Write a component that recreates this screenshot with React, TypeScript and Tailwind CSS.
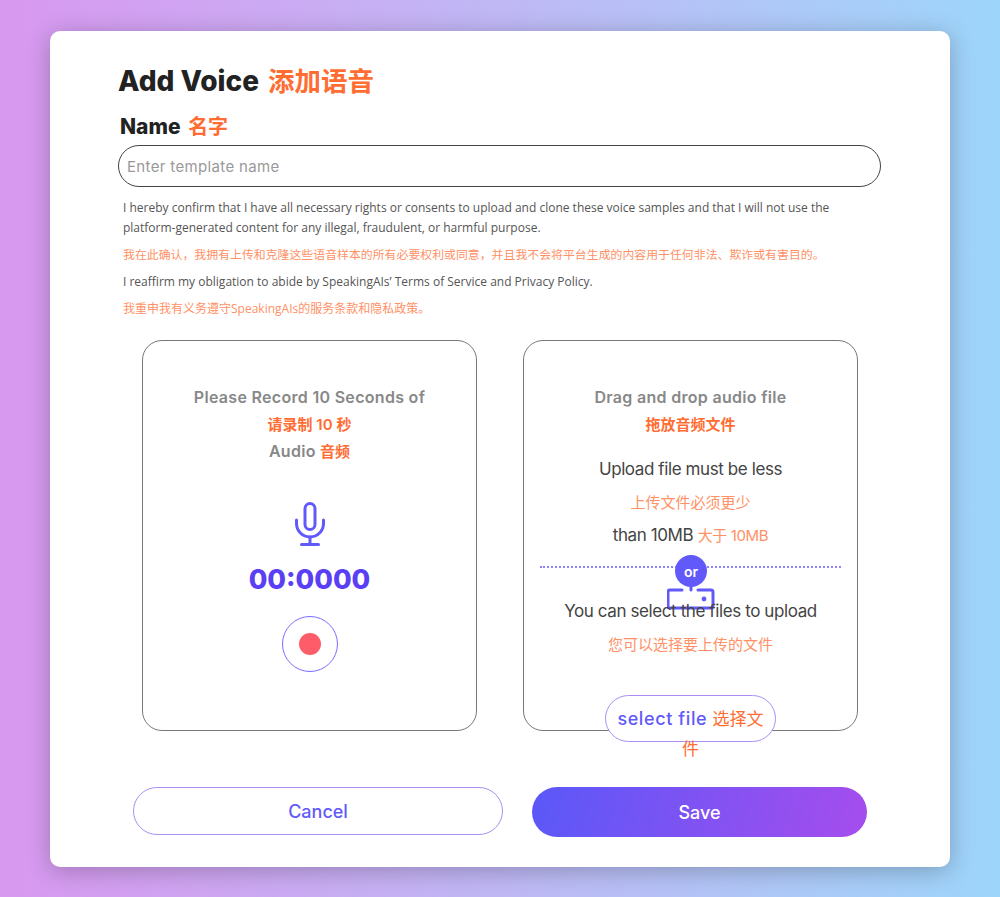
const workSans = "font-['Inter','Noto_Sans_CJK_SC',sans-serif]"
const bodySans = "font-['Open_Sans','Noto_Sans_CJK_SC',sans-serif]"

function MicIcon() {
  return (
    <svg width="30" height="44" viewBox="0 0 30 44" fill="none" stroke="#6259fb" strokeWidth="3" strokeLinecap="round" strokeLinejoin="round">
      <rect x="10" y="1.5" width="10" height="26" rx="5" />
      <path d="M1.5 18v3.5a13.5 13.5 0 0 0 27 0V18" />
      <path d="M15 35v7.5" />
      <path d="M6.5 42.5h17" />
    </svg>
  )
}

function TrayIcon() {
  return (
    <svg width="48" height="28" viewBox="0 0 48 28" fill="none" stroke="#6259fb" strokeWidth="3" strokeLinecap="round" strokeLinejoin="round">
      <path d="M24 1v7" />
      <path d="M15 8H3a2 2 0 0 0-2 2v14a2 2 0 0 0 2 2h41a2 2 0 0 0 2-2V10a2 2 0 0 0-2-2H31" />
      <circle cx="37" cy="17" r="2.4" fill="#6259fb" stroke="none" />
    </svg>
  )
}

export default function App() {
  return (
    <div className="h-[897px] pt-[31px] bg-gradient-to-r from-[#d898f0] to-[#9dd5fa]">
      <div className={`mx-[50px] h-[836px] rounded-[10px] bg-white pl-[68px] pr-[69px] pt-[32px] shadow-[0_4px_24px_rgba(0,0,0,0.25)] ${workSans}`}>
        <h1 className="h-[36px] text-[28px] leading-[36px] font-extrabold text-[#222222]">
          Add Voice <span className="ml-[3px] text-[26.5px] font-semibold text-[#ff6d33]">添加语音</span>
        </h1>
        <h2 className="mt-[14px] pl-[2px] h-[27px] text-[21px] leading-[27px] font-extrabold text-[#222222]">
          Name <span className="ml-[3px] text-[20px] font-semibold text-[#ff6d33]">名字</span>
        </h2>
        <div className="mt-[5px] flex h-[42px] items-center rounded-[21px] border border-[#444444] pl-[8px] pt-[2px] text-[15px] tracking-[0.35px] text-[#999999]">
          Enter template name
        </div>

        <div className={`mt-[11px] pl-[5px] text-[12px] leading-[20px] text-[#555555] ${bodySans}`}>
          <p className="w-[720px]">
            I hereby confirm that I have all necessary rights or consents to upload and clone these voice samples and that I will not use the platform-generated content for any illegal, fraudulent, or harmful purpose.
          </p>
          <p className="mt-[6px] text-[11.9px] text-[#ff9166]">
            我在此确认，我拥有上传和克隆这些语音样本的所有必要权利或同意，并且我不会将平台生成的内容用于任何非法、欺诈或有害目的。
          </p>
          <p className="mt-[8px]">I reaffirm my obligation to abide by SpeakingAIs’ Terms of Service and Privacy Policy.</p>
          <p className="mt-[7px] text-[#ff9166]">我重申我有义务遵守SpeakingAIs的服务条款和隐私政策。</p>
        </div>

        <div className="mt-[21px] ml-[24px] flex gap-[46px]">
          <section className="flex h-[391px] w-[335px] flex-col items-center rounded-[20px] border border-[#777777] pt-[43px]">
            <div className="text-center text-[16px] leading-[27px] font-semibold tracking-[0.3px] text-[#888888]">
              <div>Please Record 10 Seconds of</div>
              <div className="text-[15px] tracking-normal text-[#ff6d33]">请录制 10 秒</div>
              <div>
                Audio <span className="text-[15px] tracking-normal text-[#ff6d33]">音频</span>
              </div>
            </div>
            <div className="mt-[37px] h-[44px]">
              <MicIcon />
            </div>
            <div className="mt-[16px] text-[27px] leading-[36px] font-extrabold text-[#5a3ff5]">00:0000</div>
            <div className="mt-[18px] flex h-[56px] w-[56px] items-center justify-center rounded-full border border-[#7a6cff]">
              <div className="h-[22px] w-[22px] rounded-full bg-[#ff5c6a]" />
            </div>
          </section>

          <section className="relative flex h-[391px] w-[335px] flex-col items-center rounded-[20px] border border-[#777777] pt-[43px]">
            <div className="text-center text-[16px] leading-[27px] font-semibold tracking-[0.3px] text-[#888888]">
              <div>Drag and drop audio file</div>
              <div className="text-[15px] tracking-normal text-[#ff6d33]">拖放音频文件</div>
            </div>
            <div className="mt-[15px] text-center text-[17px] leading-[33px] tracking-[-0.4px] text-[#444444]">
              <div>Upload file must be less</div>
              <div className="text-[15px] tracking-normal text-[#ff9166]">上传文件必须更少</div>
              <div>
                than 10MB <span className="text-[15px] tracking-tight text-[#ff9166]">大于 10MB</span>
              </div>
            </div>
            <div className="absolute top-[225px] left-[16px] w-[301px] border-t-2 border-dotted border-[#8f83ff]" />
            <div className="absolute top-[214px] left-[151px] flex h-[32px] w-[32px] items-center justify-center rounded-full bg-[#6259fb] text-[14px] font-semibold text-white">
              or
            </div>
            <div className="absolute top-[241px] left-[143px]">
              <TrayIcon />
            </div>
            <div className="relative mt-[43px] text-center text-[17px] leading-[33px] tracking-[-0.4px] text-[#444444]">
              <div>You can select the files to upload</div>
              <div className="text-[15px] tracking-normal text-[#ff9166]">您可以选择要上传的文件</div>
            </div>
            <div className="absolute top-[354px] left-[81px] h-[47px] w-[171px] rounded-[24px] border border-[#a98ff5] bg-white px-[10px] pt-[8px] text-center text-[18px] leading-[29px] font-medium tracking-[0.6px] text-[#6259fb]">
              select file <span className="text-[17px] font-normal tracking-normal text-[#ff6d33]">选择文件</span>
            </div>
          </section>
        </div>

        <div className="mt-[56px] ml-[15px] flex items-start gap-[29px]">
          <button className="h-[48px] w-[370px] rounded-[24px] border border-[#a98ff5] text-[18px] font-medium text-[#6259fb]">Cancel</button>
          <button className="h-[50px] w-[335px] rounded-[25px] bg-[linear-gradient(105deg,#5a58f8,#a64ded)] text-[18px] font-medium text-white">Save</button>
        </div>
      </div>
    </div>
  )
}
